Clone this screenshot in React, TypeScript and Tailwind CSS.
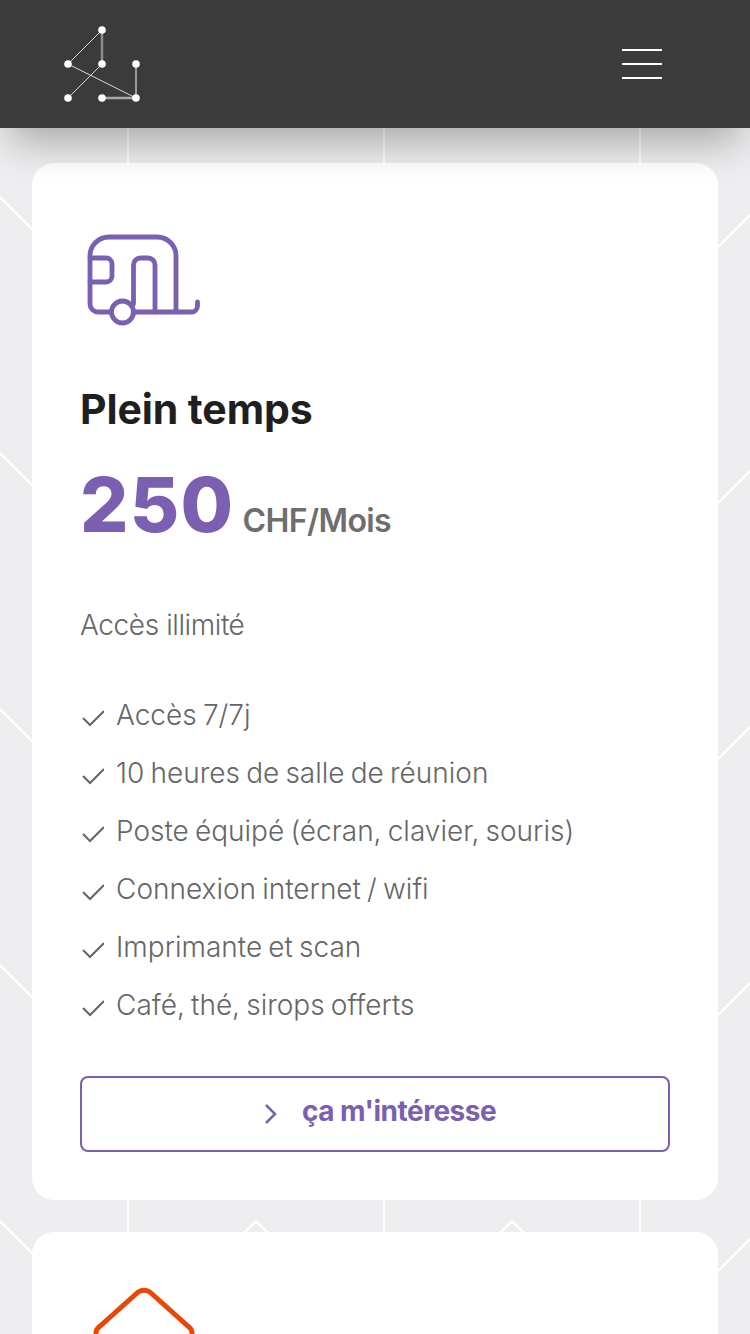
const items = [
  "Accès 7/7j",
  "10 heures de salle de réunion",
  "Poste équipé (écran, clavier, souris)",
  "Connexion internet / wifi",
  "Imprimante et scan",
  "Café, thé, sirops offerts",
];

function Pattern() {
  return (
    <svg className="absolute inset-0" width="750" height="1334" aria-hidden="true">
      <defs>
        <pattern id="tile" x="0" y="0" width="256" height="256" patternUnits="userSpaceOnUse">
          <path d="M128 100V230M0 197L50 247M256 197L206 247" fill="none" stroke="#ffffff" strokeWidth="2" />
        </pattern>
      </defs>
      <rect width="750" height="1334" fill="url(#tile)" />
    </svg>
  );
}

function Logo() {
  const dots = [[102, 30], [68, 64], [102, 64], [136, 64], [68, 98], [102, 98], [136, 98]];
  return (
    <svg width="100" height="90" viewBox="60 19 100 90" className="block">
      <path d="M102 30L68 64M102 64L68 98M68 64L136 98" stroke="#d8d8d8" strokeWidth="1" fill="none" />
      <path d="M102 30V64" stroke="#8c8c8c" strokeWidth="2.5" fill="none" />
      <path d="M136 64V98" stroke="#bbbbbb" strokeWidth="1.5" fill="none" />
      <path d="M102 98H136" stroke="#a8a8a8" strokeWidth="2.5" fill="none" />
      {dots.map(([x, y]) => (
        <circle key={`${x}-${y}`} cx={x} cy={y} r="3.8" fill="#ffffff" />
      ))}
    </svg>
  );
}

function Caravan() {
  return (
    <svg width="130" height="120" viewBox="80 212 130 120" className="mt-[1px] block" fill="none" stroke="#7b5fb0" strokeWidth="4.8" strokeLinecap="round">
      <path d="M111 312H98a8 8 0 0 1-8-8V256a19 19 0 0 1 19-19h48a19 19 0 0 1 19 19V312" />
      <path d="M90 258H106a6 6 0 0 1 6 6V276a6 6 0 0 1-6 6H90" />
      <path d="M133.500 304V265a7 7 0 0 1 7-7H148a7 7 0 0 1 7 7V312" />
      <path d="M133 312H191a6 6 0 0 0 6.500-6V302" />
      <circle cx="122.500" cy="312" r="11" />
    </svg>
  );
}

function House() {
  return (
    <svg width="130" height="54" viewBox="80 1280 130 54" className="block" fill="none" stroke="#e8470a" strokeWidth="5" strokeLinecap="round">
      <path d="M96 1345V1333a8 8 0 0 1 3-6L137 1293a10 10 0 0 1 14 0L189 1327a8 8 0 0 1 3 6V1345" />
    </svg>
  );
}

export default function App() {
  return (
    <div className="relative h-[1334px] w-[750px] overflow-hidden bg-[#eeeef0] font-['Inter',sans-serif]">
      <Pattern />
      <header className="relative z-10 flex h-[128px] items-center justify-between bg-[#3a3b3a] pl-[60px] pr-[88px] shadow-[0_24px_40px_-10px_rgba(0,0,0,0.3)]">
        <Logo />
        <div className="flex w-[40px] flex-col gap-[12px]">
          <span className="h-[2px] bg-white" />
          <span className="h-[2px] bg-white" />
          <span className="h-[2px] bg-white" />
        </div>
      </header>
      <main className="relative flex flex-col gap-[32px] px-[32px] pt-[35px]">
        <section className="rounded-[22px] bg-white px-[48px] pb-[48px] pt-[48px]">
          <Caravan />
          <h2 className="mt-[53px] text-[41px] font-bold leading-[48px] tracking-[-0.1px] text-[#1f1f1f]">Plein temps</h2>
          <div className="mt-[31px] flex items-baseline gap-[8px]">
            <span className="text-[76px] font-extrabold leading-[80px] tracking-[1.3px] text-[#7b5fb0]">250</span>
            <span className="text-[32px] font-semibold tracking-[-0.6px] text-[#6e6e6e]">CHF/Mois</span>
          </div>
          <p className="mt-[60px] text-[28px] font-light leading-[40px] tracking-[-0.4px] text-[#666666]">Accès illimité</p>
          <ul className="mt-[41px] flex flex-col">
            {items.map((t) => (
              <li key={t} className="flex h-[58px] items-center gap-[12px] text-[28px] font-light tracking-[0px] [word-spacing:-1.7px] text-[#666666]">
                <svg width="24" height="24" viewBox="0 0 24 24" className="mt-[6px] shrink-0" fill="none" stroke="#666666" strokeWidth="2">
                  <path d="M3 12L10 19L24 5" />
                </svg>
                <span>{t}</span>
              </li>
            ))}
          </ul>
          <button className="mt-[42px] flex h-[76px] w-[590px] items-center justify-center gap-[24px] rounded-[8px] border-2 border-[#7b5fb0] bg-white pl-[10px] text-[28px] font-bold tracking-[-0.5px] text-[#7b5fb0]">
            <svg width="14" height="22" viewBox="0 0 14 22" fill="none" stroke="#7b5fb0" strokeWidth="2.500">
              <path d="M2 2L11 11L2 20" />
            </svg>
            <span className="pb-[6px]">ça m'intéresse</span>
          </button>
        </section>
        <section className="h-[300px] rounded-[22px] bg-white px-[48px] pt-[48px]">
          <House />
        </section>
      </main>
    </div>
  );
}
